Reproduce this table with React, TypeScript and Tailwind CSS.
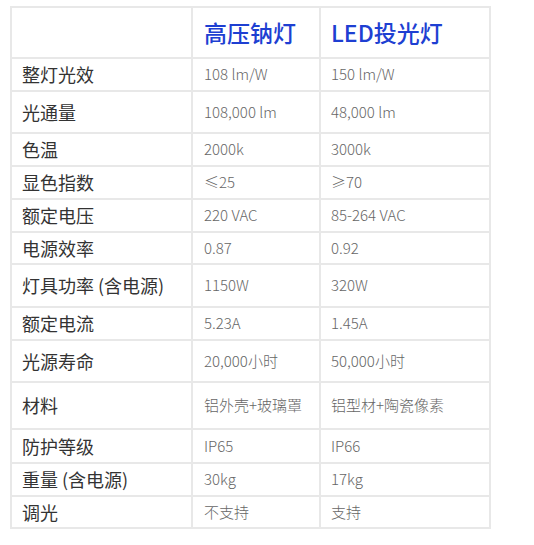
import React from 'react';

const rows = [
  { label: '整灯光效', a: '108 lm/W', b: '150 lm/W', h: 'h-[33px]' },
  { label: '光通量', a: '108,000 lm', b: '48,000 lm', h: 'h-[42px]' },
  { label: '色温', a: '2000k', b: '3000k', h: 'h-[33px]' },
  { label: '显色指数', a: '≤25', b: '≥70', h: 'h-[33px]' },
  { label: '额定电压', a: '220 VAC', b: '85-264 VAC', h: 'h-[33px]' },
  { label: '电源效率', a: '0.87', b: '0.92', h: 'h-[32px]' },
  { label: '灯具功率 (含电源)', a: '1150W', b: '320W', h: 'h-[43px]' },
  { label: '额定电流', a: '5.23A', b: '1.45A', h: 'h-[33px]' },
  { label: '光源寿命', a: '20,000小时', b: '50,000小时', h: 'h-[42px]' },
  { label: '材料', a: '铝外壳+玻璃罩', b: '铝型材+陶瓷像素', h: 'h-[47px]' },
  { label: '防护等级', a: 'IP65', b: 'IP66', h: 'h-[34px]' },
  { label: '重量 (含电源)', a: '30kg', b: '17kg', h: 'h-[33px]' },
  { label: '调光', a: '不支持', b: '支持', h: 'h-[32px]' },
];

const App = () => {
  return (
    <div className="min-h-screen bg-white pt-[6px] pl-[10px] font-['Noto_Sans_CJK_SC','Noto_Sans',sans-serif]">
      <table className="border-collapse border-2 border-[#e8e8e8] table-fixed w-[479px]">
        <colgroup>
          <col className="w-[181px]" />
          <col className="w-[128px]" />
          <col className="w-[170px]" />
        </colgroup>
        <thead>
          <tr className="h-[51px]">
            <th className="border-2 border-[#e8e8e8]" />
            <th className="border-2 border-[#e8e8e8] pl-[11px] text-left text-[23px] font-medium text-[#1e3fd2]">
              高压钠灯
            </th>
            <th className="border-2 border-[#e8e8e8] pl-[10px] text-left text-[23px] font-medium text-[#1e3fd2]">
              LED投光灯
            </th>
          </tr>
        </thead>
        <tbody>
          {rows.map((row) => (
            <tr key={row.label} className={row.h}>
              <td className="border-2 border-[#e8e8e8] pl-[10px] text-[18px] text-[#333] whitespace-nowrap">
                {row.label}
              </td>
              <td className="border-2 border-[#e8e8e8] pl-[11px] text-[15px] font-light text-[#666] whitespace-nowrap">
                {row.a}
              </td>
              <td className="border-2 border-[#e8e8e8] pl-[10px] text-[15px] font-light text-[#666] whitespace-nowrap">
                {row.b}
              </td>
            </tr>
          ))}
        </tbody>
      </table>
    </div>
  );
};

export default App;
